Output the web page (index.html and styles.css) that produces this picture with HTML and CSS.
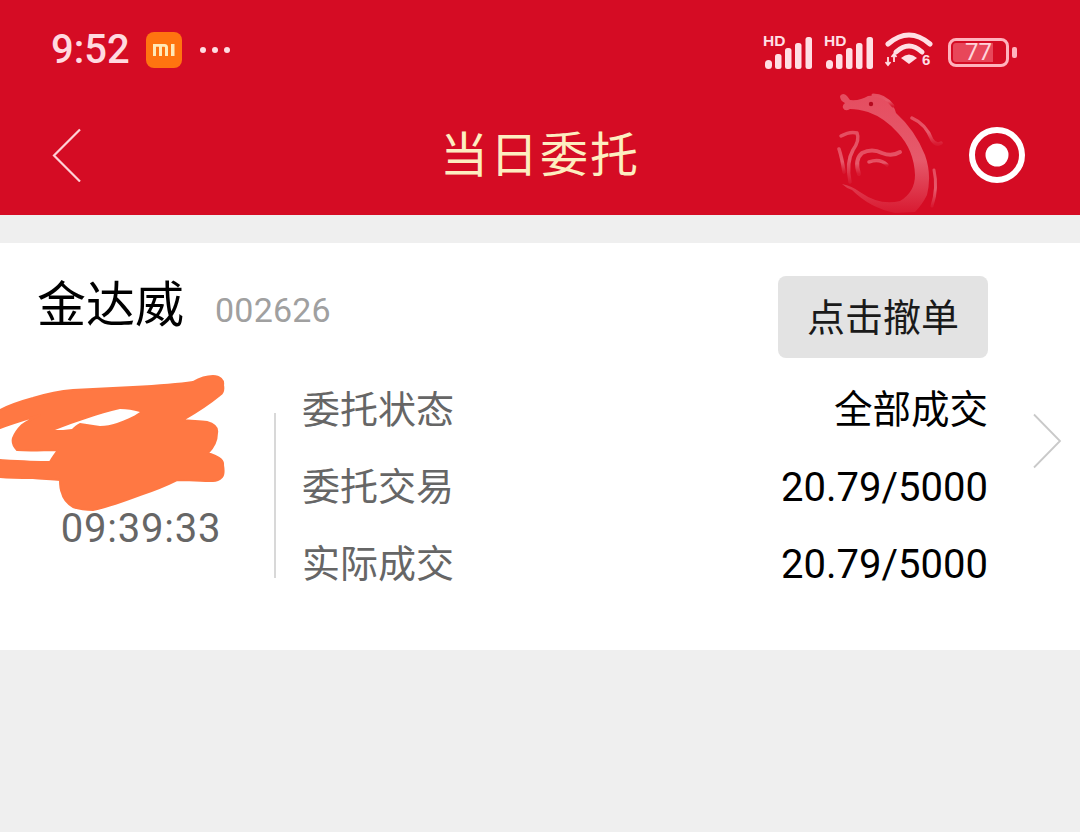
FILE: index.html
```html
<!DOCTYPE html>
<html lang="zh">
<head>
<meta charset="utf-8">
<title>当日委托</title>
<link rel="stylesheet" href="styles.css">
</head>
<body>
<header class="top">
  <div class="status">
    <div class="status-left">
      <span class="clock">9:52</span>
      <svg class="mi" viewBox="0 0 36 36"><rect width="36" height="36" rx="8" fill="#ff7410"/><path d="M7 12h11.500q3.500 0 3.500 3.500V24h-3v-8.500q0-.8-.8-.8H16V24h-3v-9.300h-3V24H7zM25 12h3.500v12H25z" fill="#ffe9b8"/></svg>
      <span class="dots"><i></i><i></i><i></i></span>
    </div>
    <div class="status-right">
      <svg class="signal" viewBox="0 -6 50 40"><text x="0" y="10" class="hd">HD</text><g fill="#ffdfe4"><rect x="2" y="24" width="7" height="9" rx="3.500"/><rect x="12" y="18" width="6.500" height="15" rx="2.500"/><rect x="22" y="12" width="6.500" height="21" rx="2.500"/><rect x="32" y="7" width="6.500" height="26" rx="2.500"/><rect x="42.500" y="1" width="6.500" height="32" rx="2.500"/></g></svg>
      <svg class="signal" viewBox="0 -6 50 40"><text x="0" y="10" class="hd">HD</text><g fill="#ffdfe4"><rect x="2" y="24" width="7" height="9" rx="3.500"/><rect x="12" y="18" width="6.500" height="15" rx="2.500"/><rect x="22" y="12" width="6.500" height="21" rx="2.500"/><rect x="32" y="7" width="6.500" height="26" rx="2.500"/><rect x="42.500" y="1" width="6.500" height="32" rx="2.500"/></g></svg>
      <svg class="wifi" viewBox="0 0 50 36"><g fill="none" stroke="#ffdfe4" stroke-width="5" stroke-linecap="round"><path d="M3 13Q24-5 45 13"/><path d="M11 21Q24 9 37 21"/></g><path d="M16 27q8-7 16 0l-8 6z" fill="#ffdfe4"/><path d="M3 26v8M9 23v8M0.500 31l2.500 3 2.500-3M6.500 26l2.500-3 2.500 3" fill="none" stroke="#ffdfe4" stroke-width="1.800"/><text x="37" y="34" class="six">6</text></svg>
      <div class="battery">
        <div class="cell"><span class="level"></span><span class="pct">77</span></div>
        <span class="nub"></span>
      </div>
    </div>
  </div>
  <nav class="nav">
    <svg class="back" viewBox="0 0 30 54"><path d="M28 1.500 2 27.500l26 26" fill="none" stroke="#ffd0d6" stroke-width="2.200"/></svg>
    <h1 class="title">当日委托</h1>
    <svg class="dragon" viewBox="820 85 130 130"><defs><linearGradient id="fade" x1="0" y1="0" x2="0" y2="1"><stop offset="0" stop-color="#e54d60"/><stop offset=".55" stop-color="#e65a6b"/><stop offset="1" stop-color="#d81a31"/></linearGradient></defs>
      <path fill="url(#fade)" d="M840 96Q843 92 847 96L850 100Q860 101 868 96Q880 94 890 102Q895 108 896 113Q915 130 925 155Q932 175 927 195Q922 205 915 212L895 213Q870 208 852 190Q846 188 842 184Q852 186 860 192Q880 206 900 201Q915 192 915 175Q914 150 898 133Q885 118 868 112Q858 109 850 109Q845 112 843 108Q842 105 845 103Q840 101 840 96Z"/>
      <g fill="none" stroke="url(#fade)" stroke-linecap="round" stroke-linejoin="round">
        <path d="M912 118Q926 124 932 140Q936 146 941 143" stroke-width="3.500"/>
        <path d="M934 170Q938 188 932 206" stroke-width="3"/>
        <path d="M873 95Q885 95 893 106" stroke-width="3"/>
        <path d="M859 174Q854 160 862 153Q872 148 882 153Q892 157 900 152" stroke-width="4"/>
        <path d="M869 162Q880 158 887 165" stroke-width="3.500"/>
        <path d="M841 136Q850 131 857 133Q860 140 853 150Q846 162 850 182" stroke-width="3.500"/>
        <path d="M839 149Q842 158 844 172" stroke-width="3.500"/>
      </g>
      <circle cx="871" cy="104" r="2.200" fill="#b50a1f"/></svg>
    <svg class="target" viewBox="0 0 56 56"><circle cx="28" cy="28" r="25" fill="none" stroke="#fff" stroke-width="6"/><circle cx="28" cy="28" r="11.500" fill="#fff"/></svg>
  </nav>
</header>
<main class="card">
  <div class="head">
    <div class="stock"><span class="name">金达威</span><span class="code">002626</span></div>
    <button class="cancel">点击撤单</button>
  </div>
  <div class="body">
    <div class="when"><span class="time">09:39:33</span></div>
    <dl class="rows">
      <div class="row"><dt>委托状态</dt><dd class="state">全部成交</dd></div>
      <div class="row"><dt>委托交易</dt><dd>20.79/5000</dd></div>
      <div class="row"><dt>实际成交</dt><dd>20.79/5000</dd></div>
    </dl>
    <svg class="more" viewBox="0 0 30 56"><path d="M2 1.500 28 28 2 54.500" fill="none" stroke="#c9c9c9" stroke-width="1.800"/></svg>
  </div>
  <svg class="scribble" viewBox="0 370 230 145"><path fill="#ff7843" stroke="#ff7843" stroke-width="2" stroke-linejoin="round" d="M0 410C12 404 22 401 33 398 46 394 60 391 73 390 93 389 113 388 133 387 153 386 173 385 193 382 200 378 206 376 213 376 220 376 224 380 223 385 224 390 223 393 220 395 208 405 195 413 183 420 191 421 199 421 207 422 214 424 218 428 217 433 217 441 213 448 208 453 216 456 224 459 223 465 224 471 224 475 222 477 219 480 216 481 213 481 201 481 189 480 177 480 165 486 152 491 140 495 124 501 108 507 93 510 86 510 79 509 73 507 67 503 63 498 62 493 60 489 60 484 60 480 51 479 42 479 33 478 22 478 11 478 0 477V460C17 461 33 462 50 462 52 458 55 454 58 450 44 450 30 451 17 450 13 446 12 442 13 438 15 433 18 429 22 425 28 421 34 418 40 415 27 419 13 423 0 428Z"/><path fill="#fff" d="M55 430C76 422 98 414 120 409 127 409 133 410 140 412 133 417 125 420 117 423 111 425 106 426 100 426 93 425 87 424 80 423 76 425 74 427 72 429 66 430 60 430 55 430Z"/></svg>
</main>
</body>
</html>
```
FILE: styles.css
```css
* { box-sizing: border-box; }
html, body { margin: 0; padding: 0; }
body {
  width: 1080px;
  height: 832px;
  overflow: hidden;
  background: #efefef;
  font-family: Roboto, "Noto Sans CJK SC", sans-serif;
}
.top {
  height: 215px;
  background: #d50c24;
  padding: 0 55px 0 52px;
  display: flex;
  flex-direction: column;
}
.status {
  height: 100px;
  display: flex;
  justify-content: space-between;
  align-items: center;
  padding-right: 8px;
}
.status-left { display: flex; align-items: center; }
.clock { color: #ffdae0; font-size: 40px; line-height: 44px; width: 95px; margin-left: -1px; font-weight: 500; }
.mi { width: 36px; height: 36px; margin-right: 18px; }
.dots { display: flex; gap: 6px; }
.dots i { width: 6px; height: 6px; border-radius: 50%; background: #ffdce1; }
.status-right { display: flex; align-items: flex-end; height: 40px; }
.signal { width: 50px; height: 40px; margin-right: 11px; }
.hd { font: 700 15.500px "Liberation Sans", sans-serif; fill: #ffdfe4; }
.wifi { width: 50px; height: 36px; margin-right: 13px; margin-bottom: 3px; }
.six { font: 700 15px "Liberation Sans", sans-serif; fill: #ffdfe4; }
.battery { display: flex; align-items: center; gap: 3px; margin-bottom: 3px; }
.cell {
  position: relative;
  width: 61px;
  height: 29px;
  border: 3px solid #ffb3bd;
  border-radius: 8px;
  padding: 2px;
  display: flex;
}
.level { width: 40px; background: #e8475a; border-radius: 3px 0 0 3px; }
.pct {
  position: absolute;
  inset: 0;
  text-align: center;
  color: #ffd5da;
  font-size: 24px;
  line-height: 23px;
}
.nub { width: 5px; height: 11px; background: #ffb3bd; border-radius: 2px; }
.nav {
  position: relative;
  flex: 1;
  display: flex;
  align-items: center;
  justify-content: space-between;
  padding-bottom: 5px;
}
.back { width: 30px; height: 54px; }
.title {
  margin: 0;
  color: #fdeec0;
  font: 400 48px/56px "Noto Sans CJK SC", sans-serif;
  letter-spacing: 2px;
  position: absolute;
  left: 388px;
  top: 23px;
}
.dragon { position: absolute; left: 768px; top: -15px; width: 130px; height: 130px; filter: blur(0.5px); }
.target { width: 56px; height: 56px; filter: blur(0.6px); }
.card {
  position: relative;
  margin-top: 28px;
  height: 407px;
  background: #fff;
  padding: 33px 92px 0 37px;
}
.head { display: flex; justify-content: space-between; align-items: flex-start; }
.stock { display: flex; align-items: center; height: 56px; gap: 31px; margin-top: -3px; }
.name { font: 400 49px/56px "Noto Sans CJK SC", sans-serif; color: #000; }
.code { font-size: 34px; letter-spacing: .2px; color: #a0a0a0; margin-top: 18px; }
.cancel {
  width: 210px;
  height: 82px;
  border: 0;
  border-radius: 8px;
  background: #e3e3e3;
  color: #1a1a1a;
  font: 400 38px/1 "Noto Sans CJK SC", sans-serif;
  padding: 0 0 5px;
}
.body { display: flex; margin: 55px 0 0 -37px; position: relative; }
.when {
  width: 276px;
  height: 165px;
  border-right: 2px solid #d8d8d8;
  display: flex;
  align-items: flex-end;
  justify-content: center;
  padding: 0 0 27px 8px;
}
.time { font-size: 40px; line-height: 44px; letter-spacing: .8px; color: #666; }
.rows { flex: 1; margin: -44px 0 0 26px; }
.row { display: flex; justify-content: space-between; align-items: center; height: 77px; }
.row dt { font: 400 38px/1 "Noto Sans CJK SC", sans-serif; color: #666; margin-bottom: 2px; }
.row dd { margin: 0; padding-top: 6px; font: 400 40px/1 Roboto, "Noto Sans CJK SC", sans-serif; color: #000; }
.row .state { padding: 0 0 2px; font: 400 38.500px/1 "Noto Sans CJK SC", sans-serif; }
.more { position: absolute; left: 1032px; top: 0; width: 30px; height: 56px; }
.scribble { position: absolute; left: 0; top: 127px; width: 230px; height: 145px; }
```
